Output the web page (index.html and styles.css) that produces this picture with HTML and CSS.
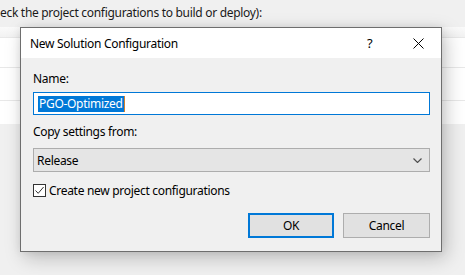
FILE: index.html
```html
<!DOCTYPE html>
<html>
<head>
<meta charset="utf-8">
<link rel="stylesheet" href="styles.css">
</head>
<body>
<div class="page">
  <div class="hint">eck the project configurations to build or deploy):</div>
  <div class="grid">
    <div class="grid-row header"></div>
    <div class="grid-row r1"></div>
    <div class="grid-row r2"></div>
    <div class="grid-row r3"></div>
  </div>
</div>

<div class="dialog">
  <div class="titlebar">
    <span class="title">New Solution Configuration</span>
    <span class="help">?</span>
    <svg class="close" width="11" height="11" viewBox="0 0 11 11"><path d="M0.5 0.5 L10.5 10.5 M10.5 0.5 L0.5 10.5" stroke="#000" stroke-width="1" fill="none"/></svg>
  </div>
  <div class="body">
    <div class="label first">Name:</div>
    <div class="input"><span class="sel">PGO-Optimized</span><span class="caret"></span></div>
    <div class="label second">Copy settings from:</div>
    <div class="select">
      <span>Release</span>
      <svg class="chev" width="9" height="5" viewBox="0 0 9 5"><path d="M0.5 0.5 L4.5 4.5 L8.5 0.5" stroke="#505050" stroke-width="1.2" fill="none"/></svg>
    </div>
    <div class="check-row">
      <span class="box"><svg width="11" height="11" viewBox="0 0 11 11"><path d="M1.5 5.5 L4.2 8.3 L9.6 2" stroke="#333" stroke-width="1" fill="none"/></svg></span>
      <span class="check-label">Create new project configurations</span>
    </div>
    <div class="buttons">
      <div class="btn ok">OK</div>
      <div class="btn cancel">Cancel</div>
    </div>
  </div>
</div>
</body>
</html>
```
FILE: styles.css
```css
html, body {
  margin: 0;
  padding: 0;
}
body {
  width: 465px;
  height: 275px;
  overflow: hidden;
  background: #f0f0f0;
  font-family: "Noto Sans", "Open Sans", sans-serif;
  font-size: 12px;
  letter-spacing: -0.3px;
  color: #000;
  position: relative;
}
.page {
  display: flex;
  flex-direction: column;
}
.hint {
  height: 27px;
  line-height: 26px;
  padding-left: 0;
  color: #1a1a1a;
  white-space: nowrap;
}
.grid {
  background: #fff;
  height: 97px;
  display: flex;
  flex-direction: column;
}
.grid-row {
  border-bottom: 1px solid #e8e8e8;
}
.header {
  height: 10px;
  background: linear-gradient(#fafafa, #f2f2f2);
}
.r1 { height: 29px; }
.r2 { height: 32px; }
.r3 { height: 22px; border-bottom: none; }

.dialog {
  position: absolute;
  left: 20px;
  top: 27px;
  width: 420px;
  height: 223px;
  border: 1px solid #6e6e6e;
  background: #f0f0f0;
  box-shadow: 4px 6px 18px rgba(0, 0, 0, 0.22), 0 0 8px rgba(0,0,0,0.08);
  display: flex;
  flex-direction: column;
}
.titlebar {
  height: 30px;
  background: #fff;
  display: flex;
  align-items: center;
  padding-left: 9px;
}
.title {
  flex: 1;
  white-space: nowrap;
}
.help {
  width: 10px;
  font-size: 13px;
  margin-right: 36px;
}
.close {
  margin-right: 17px;
}
.body {
  display: flex;
  flex-direction: column;
  padding: 0 11px 0 12px;
}
.label {
  line-height: 16px;
  height: 16px;
  white-space: nowrap;
}
.label.first { margin-top: 13px; }
.label.second { margin-top: 9px; }
.input {
  margin-top: 5px;
  height: 21px;
  border: 1px solid #0078d7;
  background: #fff;
  display: flex;
  align-items: center;
  padding-left: 4px;
}
.sel {
  background: #0078d7;
  color: #fff;
  line-height: 16px;
  padding: 0 1px;
}
.caret {
  width: 1px;
  height: 16px;
  background: #d08030;
}
.select {
  margin-top: 8px;
  height: 22px;
  border: 1px solid #adadad;
  background: #e5e5e5;
  display: flex;
  align-items: center;
  padding-left: 3px;
  padding-right: 7px;
}
.select span { flex: 1; }
.check-row {
  margin-top: 10px;
  height: 16px;
  display: flex;
  align-items: center;
}
.box {
  width: 11px;
  height: 11px;
  border: 1px solid #333;
  background: #fff;
  display: flex;
  margin-right: 3px;
}
.check-label {
  white-space: nowrap;
}
.buttons {
  margin-top: 15px;
  display: flex;
  justify-content: flex-end;
  gap: 9px;
}
.btn {
  height: 25px;
  box-sizing: border-box;
  background: #e1e1e1;
  display: flex;
  align-items: center;
  justify-content: center;
}
.ok {
  width: 86px;
  border: 2px solid #0078d7;
}
.cancel {
  width: 87px;
  border: 1px solid #adadad;
}
```
